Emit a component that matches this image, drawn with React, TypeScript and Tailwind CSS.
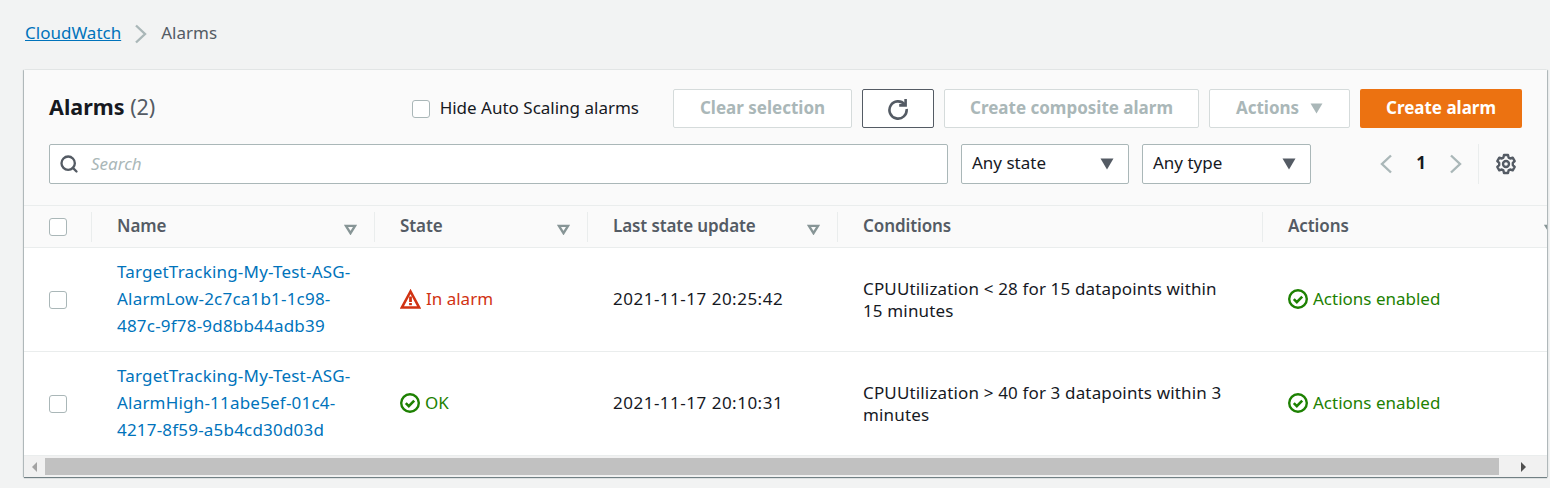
import { Search } from "lucide-react";

const FONT = "font-['Noto_Sans',sans-serif]";

function Checkbox() {
  return <div className="w-[18px] h-[18px] rounded-[3px] border border-[#aab7b8] bg-white shrink-0" />;
}

function Caret({ className }: { className: string }) {
  return (
    <svg viewBox="0 0 14 12" className={className}>
      <path d="M0.5 0.5h13L7 11.5z" fill="currentColor" />
    </svg>
  );
}

function SortCaret() {
  return (
    <svg viewBox="0 0 14 12" className="w-[13px] h-[11px] shrink-0 text-[#879596] ml-auto mt-[7px]">
      <path d="M2 2h10L7 10z" fill="none" stroke="currentColor" strokeWidth="2.6" />
    </svg>
  );
}

function Chevron({ left, className }: { left?: boolean; className: string }) {
  return (
    <svg viewBox="0 0 14 20" className={className} fill="none" stroke="currentColor">
      <path d={left ? "M12 1.500L3 10l9 8.500" : "M2 1.500L11 10l-9 8.500"} strokeWidth="2.400" />
    </svg>
  );
}

function CheckCircle() {
  return (
    <svg viewBox="0 0 20 20" className="w-5 h-5 shrink-0 text-[#1d8102]" fill="none" stroke="currentColor">
      <circle cx="10" cy="10" r="8.800" strokeWidth="2.400" />
      <path d="M5.800 10.200l3 3 5.400-5.600" strokeWidth="2.600" />
    </svg>
  );
}

function Warning() {
  return (
    <svg viewBox="0 0 21 20" className="w-[21px] h-5 shrink-0 text-[#d13212]" fill="none" stroke="currentColor">
      <path d="M10.500 2.500L1.900 18.500h17.200z" strokeWidth="2.600" />
      <path d="M10.500 7.500v5.500" strokeWidth="2.800" />
      <path d="M10.500 14v2.200" strokeWidth="2.800" />
    </svg>
  );
}

function Refresh() {
  return (
    <svg viewBox="0 0 22 22" className="w-[22px] h-[22px]" fill="none" stroke="currentColor">
      <path d="M17.600 6.400A8.600 8.600 0 1 0 19.600 11" strokeWidth="2.600" />
      <path d="M18.600 1v6.400h-6.400" strokeWidth="2.600" />
    </svg>
  );
}

function Gear() {
  return (
    <svg viewBox="0 0 22 22" className="w-[22px] h-[22px] text-[#545b64]" fill="none" stroke="currentColor">
      <circle cx="11" cy="11" r="3" strokeWidth="2.400" />
      <path
        d="M9 2h4l.6 2.600 1.600.9 2.500-.8 2 3.400-1.900 1.800v2.200l1.900 1.800-2 3.400-2.500-.8-1.600.9L13 20H9l-.6-2.600-1.600-.9-2.500.8-2-3.400 1.900-1.800V9.900L2.300 8.100l2-3.400 2.500.8 1.600-.9z"
        strokeWidth="2.400"
        strokeLinejoin="round"
      />
    </svg>
  );
}

function Actions() {
  return (
    <div className="flex items-center gap-[5px] text-[#1d8102]">
      <CheckCircle />
      <span>Actions enabled</span>
    </div>
  );
}

function HeadCell({ width, label, sort }: { width: string; label: string; sort?: boolean }) {
  return (
    <div className={`${width} shrink-0 h-[30px] flex items-center pl-[25px] pr-[17px] pb-[2px] border-l border-[#eaeded] text-[#545b64] font-semibold tracking-[-0.1px]`}>
      <span>{label}</span>
      {sort && <SortCaret />}
    </div>
  );
}

function Row({ name, state, condition, last }: { name: string[]; state: React.ReactNode; condition: string; last: string }) {
  return (
    <div className="h-[104px] flex items-center border-b border-[#eaeded] bg-white text-[#16191f] leading-[26px]">
      <div className="w-[68px] shrink-0 pl-[25px]">
        <Checkbox />
      </div>
      <div className="w-[283px] shrink-0 pl-[25px] pb-[2px] text-[#0073bb] leading-[27px] tracking-[0.2px]">
        {name.map((line) => (
          <div key={line}>{line}</div>
        ))}
      </div>
      <div className="w-[213px] shrink-0 pl-[25px] pb-[2px]">{state}</div>
      <div className="w-[250px] shrink-0 pl-[25px] pb-[2px] tracking-[0.5px]">{last}</div>
      <div className="w-[425px] shrink-0 pl-[25px] pr-[30px] leading-[22px] tracking-[0.15px]">{condition}</div>
      <div className="pl-[25px] pb-[2px]">
        <Actions />
      </div>
    </div>
  );
}

export default function App() {
  return (
    <div className={`${FONT} w-[1550px] h-[488px] overflow-hidden bg-[#f2f3f3] text-[17px]`}>
      {/* BREADCRUMB */}

      <div className="h-[70px] pl-[25px] pt-[20px] flex items-start leading-[26px]">
        <a className="text-[#0073bb] underline">CloudWatch</a>
        <Chevron className="w-[14px] h-[20px] mx-[13px] mt-[4px] text-[#aab7b8]" />
        <span className="text-[#545b64]">Alarms</span>
      </div>

      {/* CARD */}

      <div className="ml-[24px] w-[1523px] h-[407px] bg-white shadow-[0_1px_1px_rgba(0,28,36,0.5),-1px_0_1px_rgba(0,28,36,0.2),1px_0_1px_rgba(0,28,36,0.2)] flex flex-col overflow-hidden">
        {/* HEADER */}

        <div className="h-[135px] bg-[#fafafa] px-[25px] pt-[19px] shrink-0">
          <div className="flex items-center h-[39px]">
            <h1 className="text-[21.5px] font-bold text-[#16191f] pb-[3px]">
              Alarms <span className="font-normal text-[#545b64]">(2)</span>
            </h1>
            <div className="ml-auto flex items-center gap-[10px]">
              <Checkbox />
              <span className="text-[#16191f] mr-[24px] pb-[2px]">Hide Auto Scaling alarms</span>
              <button className="w-[179px] h-[39px] pb-[2px] bg-white border border-[#d5dbdb] rounded-[2px] text-[#aab7b8] font-bold">
                Clear selection
              </button>
              <button className="w-[72px] h-[39px] bg-white border border-[#545b64] rounded-[2px] flex items-center justify-center text-[#545b64]">
                <Refresh />
              </button>
              <button className="w-[255px] h-[39px] pb-[2px] bg-white border border-[#d5dbdb] rounded-[2px] text-[#aab7b8] font-bold">
                Create composite alarm
              </button>
              <button className="w-[141px] h-[39px] pb-[2px] bg-white border border-[#d5dbdb] rounded-[2px] text-[#aab7b8] font-bold flex items-center justify-center gap-[11px]">
                Actions
                <Caret className="w-[13px] h-[11px] mt-[2px]" />
              </button>
              <button className="w-[162px] h-[39px] pb-[2px] bg-[#ec7211] rounded-[2px] text-white font-bold">
                Create alarm
              </button>
            </div>
          </div>

          <div className="flex items-center h-[40px] mt-[16px]">
            <div className="w-[899px] h-[40px] bg-white border border-[#aab7b8] rounded-[2px] flex items-center pl-[9px]">
              <Search className="w-[20px] h-[20px] text-[#545b64]" strokeWidth={2.8} />
              <span className="ml-[12px] italic text-[#aab7b8]">Search</span>
            </div>
            <div className="ml-[13px] w-[168px] h-[40px] bg-white border border-[#aab7b8] rounded-[2px] flex items-center justify-between pl-[10px] pr-[14px] pb-[2px] text-[#16191f]">
              Any state
              <Caret className="w-[14px] h-[12px] mt-[2px] text-[#545b64]" />
            </div>
            <div className="ml-[13px] w-[169px] h-[40px] bg-white border border-[#aab7b8] rounded-[2px] flex items-center justify-between pl-[10px] pr-[14px] pb-[2px] text-[#16191f]">
              Any type
              <Caret className="w-[14px] h-[12px] mt-[2px] text-[#545b64]" />
            </div>
            <div className="ml-[68px] flex items-center">
              <Chevron left className="w-[14px] h-[20px] text-[#aab7b8]" />
              <span className="w-[56px] text-center font-bold text-[#16191f] pb-[2px]">1</span>
              <Chevron className="w-[14px] h-[20px] text-[#aab7b8]" />
            </div>
            <div className="ml-[15px] h-[40px] border-l border-[#eaeded] flex items-center pl-[16px]">
              <Gear />
            </div>
          </div>
        </div>

        {/* TABLE HEAD */}

        <div className="h-[43px] shrink-0 bg-[#fafafa] border-y border-[#eaeded] flex items-center">
          <div className="w-[67px] shrink-0 pl-[25px]">
            <Checkbox />
          </div>
          <HeadCell width="w-[283px]" label="Name" sort />
          <HeadCell width="w-[213px]" label="State" sort />
          <HeadCell width="w-[250px]" label="Last state update" sort />
          <HeadCell width="w-[425px]" label="Conditions" />
          <HeadCell width="w-[312px]" label="Actions" sort />
        </div>

        {/* ROWS */}

        <Row
          name={["TargetTracking-My-Test-ASG-", "AlarmLow-2c7ca1b1-1c98-", "487c-9f78-9d8bb44adb39"]}
          state={
            <div className="flex items-center gap-[5px] text-[#d13212]">
              <Warning />
              <span>In alarm</span>
            </div>
          }
          last="2021-11-17 20:25:42"
          condition="CPUUtilization < 28 for 15 datapoints within 15 minutes"
        />
        <Row
          name={["TargetTracking-My-Test-ASG-", "AlarmHigh-11abe5ef-01c4-", "4217-8f59-a5b4cd30d03d"]}
          state={
            <div className="flex items-center gap-[5px] text-[#1d8102]">
              <CheckCircle />
              <span>OK</span>
            </div>
          }
          last="2021-11-17 20:10:31"
          condition="CPUUtilization > 40 for 3 datapoints within 3 minutes"
        />

        {/* SCROLLBAR */}

        <div className="flex-1 bg-[#f1f1f1] flex items-center">
          <div className="w-[21px] flex justify-center">
            <div className="border-y-[5px] border-y-transparent border-r-[5px] border-r-[#a3a3a3]" />
          </div>
          <div className="w-[1454px] h-[17px] bg-[#c1c1c1]" />
          <div className="flex-1 flex justify-center">
            <div className="border-y-[5px] border-y-transparent border-l-[5px] border-l-[#505050]" />
          </div>
        </div>
      </div>
    </div>
  );
}
